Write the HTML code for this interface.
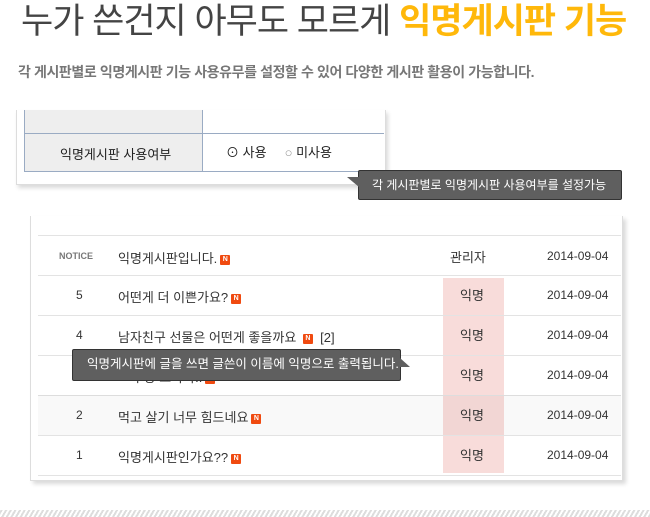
<!DOCTYPE html>
<html><head><meta charset="utf-8"><style>
body{margin:0;width:650px;height:517px;background:#fff;position:relative;overflow:hidden;font-family:"Liberation Sans","Noto Sans CJK KR",sans-serif;}
.a{position:absolute}
.title{left:21px;top:-7px;font-size:35px;color:#444;white-space:nowrap;letter-spacing:-1px}
.title b{color:#ffb80a}
.sub{left:18px;top:62px;font-size:14px;color:#777;font-weight:bold;white-space:nowrap;letter-spacing:-0.4px}
.n{display:inline-block;width:10px;height:10px;background:#f04a10;color:#fff;font-size:7px;font-weight:bold;line-height:10px;text-align:center;border-radius:1px;vertical-align:middle;margin-left:3px;font-style:normal}
.row{position:absolute;left:38px;width:583px;height:40px;border-bottom:1px solid #e3e3e3;font-size:12px;color:#333}
.row span{position:absolute;top:13px;white-space:nowrap}
.row .t{font-size:13px;top:12px}
.tip{background:#5f5f5f;color:#fff;white-space:nowrap;border:1px solid #333;border-radius:2px}
</style></head><body>
<div class="a title">누가 쓴건지 아무도 모르게 <b>익명게시판 기능</b></div>
<div class="a sub">각 게시판별로 익명게시판 기능 사용유무를 설정할 수 있어 다양한 게시판 활용이 가능합니다.</div>

<div class="a" style="left:16px;top:110px;width:368px;height:74px;border:1px solid #ddd;border-top:none;box-shadow:2px 3px 4px rgba(0,0,0,0.15);background:#fff"></div>
<div class="a" style="left:24px;top:110px;width:360px;height:61px;border-left:1px solid #9aabc3;border-bottom:1px solid #9aabc3"></div>
<div class="a" style="left:25px;top:110px;width:177px;height:61px;background:#eee;border-right:1px solid #9aabc3"></div>
<div class="a" style="left:25px;top:133px;width:359px;border-top:1px solid #9aabc3"></div>
<div class="a" style="left:60px;top:144px;font-size:13px;color:#222">익명게시판 사용여부</div>
<div class="a" style="left:226px;top:142px;font-size:13px;color:#222;white-space:nowrap">⊙ 사용&nbsp;&nbsp;&nbsp;&nbsp; <span style="color:#999">○</span> 미사용</div>
<div class="a tip" style="left:358px;top:170px;width:262px;height:28px;line-height:28px;text-indent:13px;font-size:12px">각 게시판별로 익명게시판 사용여부를 설정가능</div>
<div class="a" style="left:347px;top:177px;width:0;height:0;border-right:12px solid #5f5f5f;border-bottom:10px solid transparent"></div>

<div class="a" style="left:30px;top:216px;width:591px;height:264px;border:1px solid #ddd;border-top:none;box-shadow:3px 3px 4px rgba(0,0,0,0.15);background:#fff"></div>
<div class="a" style="left:38px;top:235px;width:583px;border-top:1px solid #e3e3e3"></div>
<div class="a" style="left:443px;top:278px;width:61px;height:195px;background:#f8dcda"></div>
<div class="row" style="top:236px;height:39px"><span style="left:21px;font-size:9px;font-weight:bold;color:#777;top:15px">NOTICE</span><span class="t" style="left:80px">익명게시판입니다.<i class="n">N</i></span><span style="left:412px;top:11px;font-size:13px">관리자</span><span style="left:509px">2014-09-04</span></div>
<div class="row" style="top:275px"><span style="left:38px">5</span><span class="t" style="left:80px">어떤게 더 이쁜가요?<i class="n">N</i></span><span style="left:422px;top:10px;font-size:13px">익명</span><span style="left:509px">2014-09-04</span></div>
<div class="row" style="top:315px"><span style="left:38px">4</span><span class="t" style="left:80px">남자친구 선물은 어떤게 좋을까요 <i class="n">N</i>&nbsp; [2]</span><span style="left:422px;top:10px;font-size:13px">익명</span><span style="left:509px">2014-09-04</span></div>
<div class="row" style="top:355px"><span style="left:38px">3</span><span class="t" style="left:80px">** 무상 보아라!!<i class="n">N</i></span><span style="left:422px;top:10px;font-size:13px">익명</span><span style="left:509px">2014-09-04</span></div>
<div class="row" style="top:395px;background:rgba(0,0,0,0.025)"><span style="left:38px">2</span><span class="t" style="left:80px">먹고 살기 너무 힘드네요<i class="n">N</i></span><span style="left:422px;top:10px;font-size:13px">익명</span><span style="left:509px">2014-09-04</span></div>
<div class="row" style="top:435px"><span style="left:38px">1</span><span class="t" style="left:80px">익명게시판인가요??<i class="n">N</i></span><span style="left:422px;top:10px;font-size:13px">익명</span><span style="left:509px">2014-09-04</span></div>
<div class="a tip" style="left:72px;top:349px;width:327px;height:30px;line-height:28px;text-indent:14px;font-size:12.5px">익명게시판에 글을 쓰면 글쓴이 이름에 익명으로 출력됩니다.</div>
<div class="a" style="left:400px;top:358px;width:0;height:0;border-left:10px solid #5f5f5f;border-top:9px solid transparent"></div>

<div class="a" style="left:0;top:510px;width:650px;height:7px;background:repeating-linear-gradient(-60deg,#ddd 0 2px,#fff 2px 4px)"></div>
</body></html>
